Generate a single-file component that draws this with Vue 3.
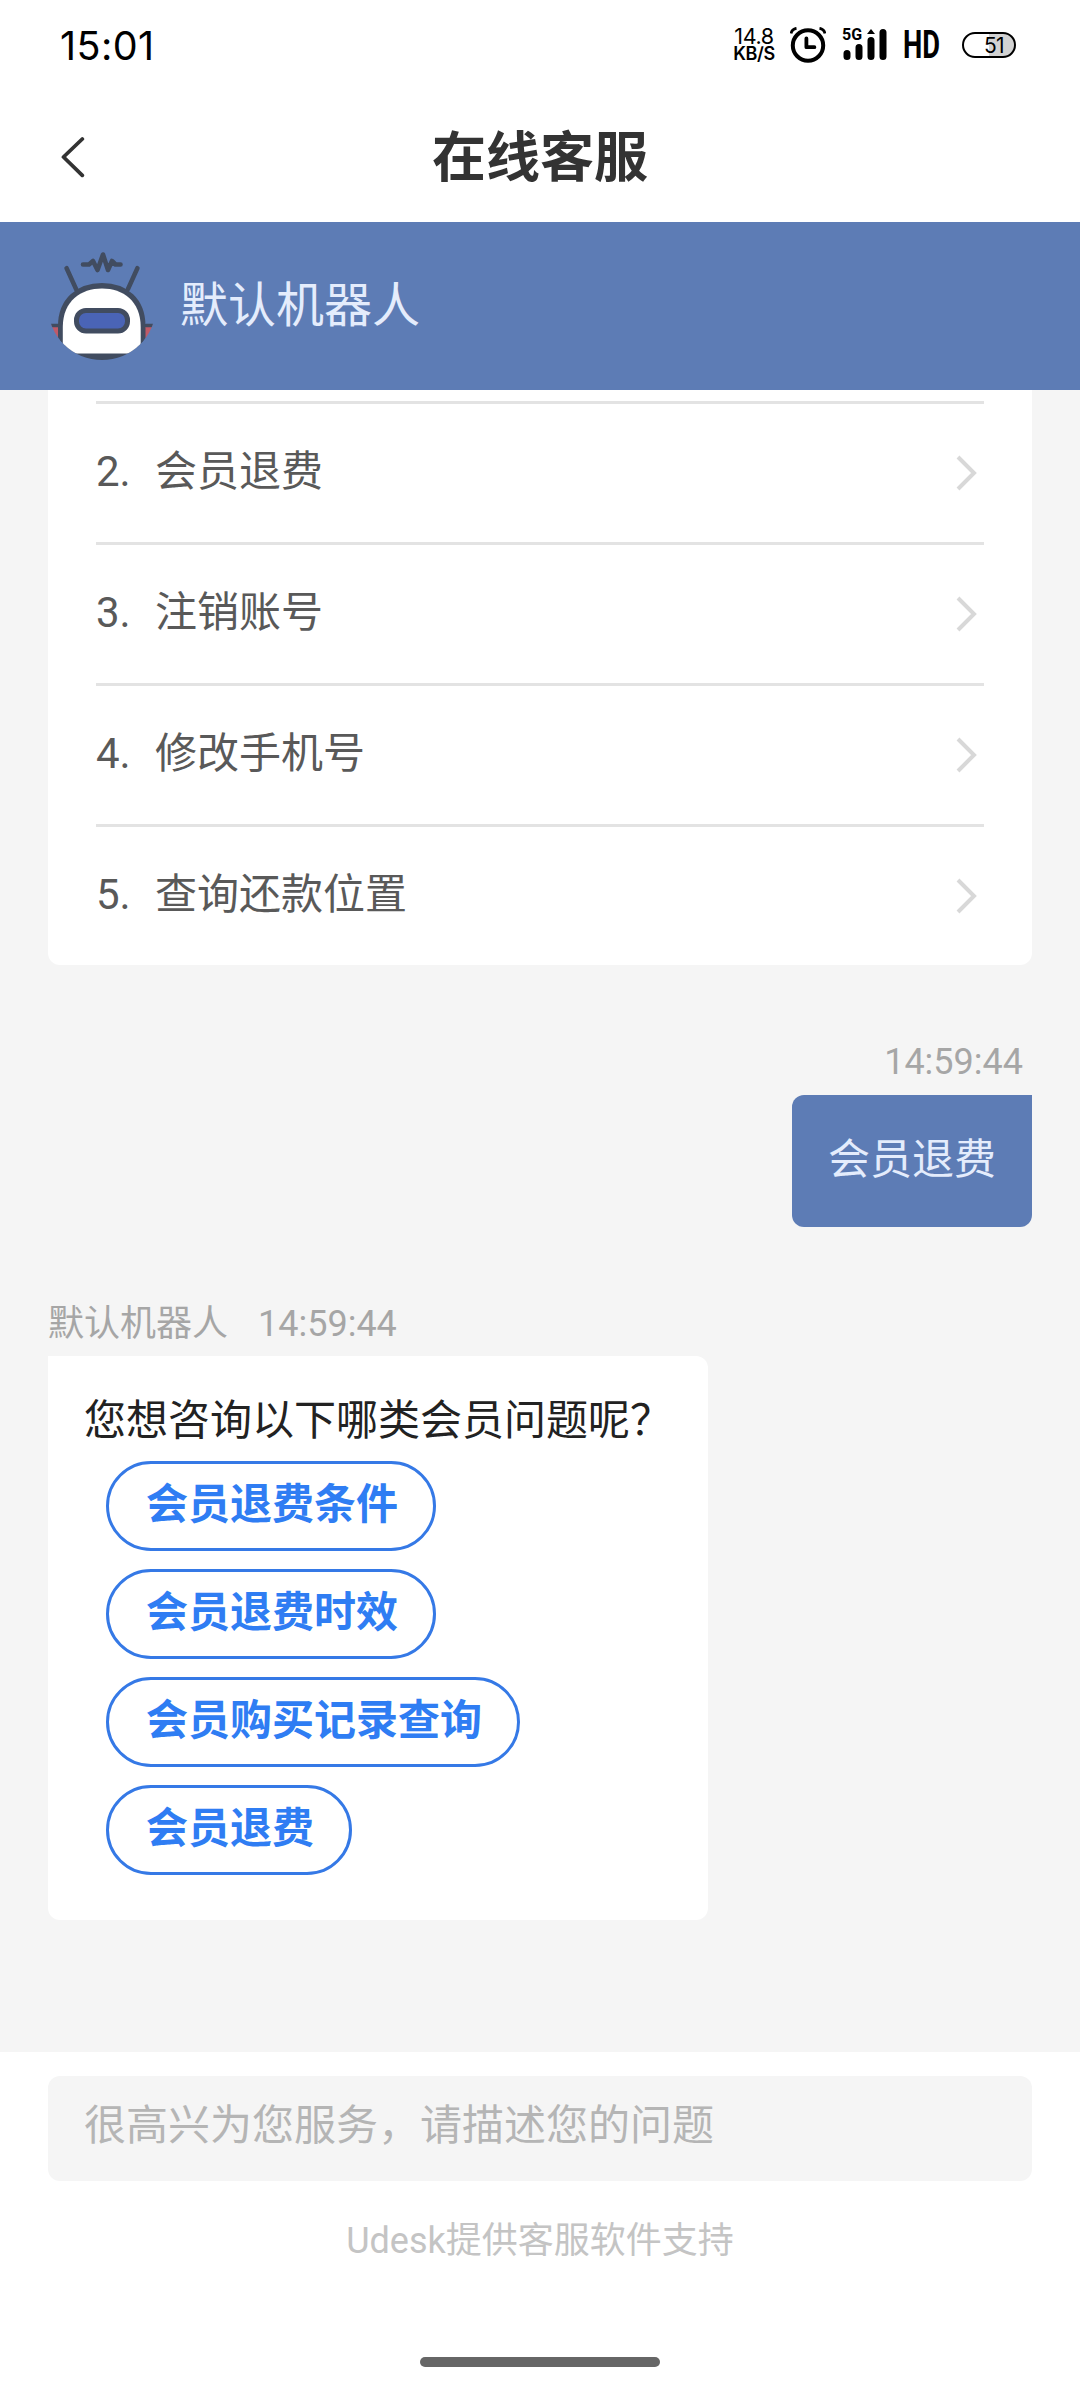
<script setup>
const questions = [
  { no: 2, text: '会员退费' },
  { no: 3, text: '注销账号' },
  { no: 4, text: '修改手机号' },
  { no: 5, text: '查询还款位置' },
]
const options = ['会员退费条件', '会员退费时效', '会员购买记录查询', '会员退费']
</script>

<template>
  <div class="screen">
    <div class="status">
      <span class="clock">15:01</span>
      <div class="indicators">
        <div class="speed"><span class="rate">14.8</span><span class="unit">KB/S</span></div>
        <svg class="alarm" width="36" height="36" viewBox="0 0 36 36">
          <circle cx="18" cy="18.5" r="15.2" fill="none" stroke="#000" stroke-width="4" />
          <path d="M16.4 11.500v8.700h8" fill="none" stroke="#000" stroke-width="3.8" stroke-linecap="round" stroke-linejoin="round" />
          <path d="M1 6.500Q2 2 6.500 1.300M35 6.500Q34 2 29.500 1.300" fill="none" stroke="#000" stroke-width="2.8" />
        </svg>
        <div class="signal">
          <span class="net">5G</span>
          <svg width="44" height="34" viewBox="0 0 44 34">
            <g stroke="#000" stroke-width="7" stroke-linecap="round">
              <path d="M4 25.500V28.500M16 19.500V28.500M28 12.500V28.500M40 4.500V28.500" />
            </g>
            <path d="M24 6L28 1L32 6Z" />
          </svg>
        </div>
        <span class="hd">HD</span>
        <div class="battery"><span>51</span></div>
      </div>
    </div>

    <header class="nav">
      <svg class="back" width="24" height="44" viewBox="0 0 24 44">
        <path d="M21.300 3L2.500 21L21.300 39.300" fill="none" stroke="#333" stroke-width="3.8" stroke-linecap="round" stroke-linejoin="round" />
      </svg>
      <h1>在线客服</h1>
    </header>

    <section class="agent">
      <svg class="avatar" width="108" height="108" viewBox="0 0 108 108">
        <defs><clipPath id="round"><circle cx="54" cy="54" r="54" /></clipPath></defs>
        <g clip-path="url(#round)" stroke="#414c60" stroke-linecap="round" stroke-linejoin="round">
          <path d="M35 12.500H41L45 9L49.500 18L55 2.500L60 18L64 9L67.500 12.500H72.500" fill="none" stroke-width="4.600" />
          <path d="M18.500 16L28.500 38M89.500 16L80 37" fill="none" stroke-width="4.500" />
          <rect x="1" y="73" width="9" height="13" fill="#c05a68" stroke="none" />
          <rect x="97" y="73" width="9" height="13" fill="#c05a68" stroke="none" />
          <path d="M3 73.500H10M98 73.500H105" stroke-width="3.500" />
          <path d="M12 120V74C12 48 30 33 54 33S95.500 48 95.500 74V120Z" fill="#414c60" stroke-width="4" />
          <path d="M14.800 101.500V75C14.800 49 33 36.500 54 36.500S92.700 49 92.700 75V101.500Z" fill="#fff" stroke="none" />
          <rect x="28.500" y="58.500" width="51" height="20.500" rx="9.500" fill="#4a64b6" stroke-width="5" />
        </g>
      </svg>
      <span class="agent-name">默认机器人</span>
    </section>

    <main class="chat">
      <ul class="faq">
        <li v-for="q in questions" :key="q.no">
          <span class="no">{{ q.no }}.</span>
          <span class="q">{{ q.text }}</span>
          <svg class="chev" width="22" height="36" viewBox="0 0 22 36">
            <path d="M2 2L18 18L2 34" fill="none" stroke="#d8d8d8" stroke-width="4" />
          </svg>
        </li>
      </ul>

      <div class="sent">
        <time>14:59:44</time>
        <div class="bubble">会员退费</div>
      </div>

      <div class="received">
        <div class="meta"><span>默认机器人</span><time>14:59:44</time></div>
        <div class="answer">
          <p>您想咨询以下哪类会员问题呢？</p>
          <button v-for="o in options" :key="o" type="button">{{ o }}</button>
        </div>
      </div>
    </main>

    <footer class="composer">
      <div class="input">很高兴为您服务，请描述您的问题</div>
      <p class="support">Udesk提供客服软件支持</p>
      <div class="home"></div>
    </footer>
  </div>
</template>

<style>
body {
  margin: 0;
  background: #fff;
}
</style>

<style scoped>
* {
  box-sizing: border-box;
}
.screen {
  display: flex;
  flex-direction: column;
  width: 1080px;
  height: 2400px;
  overflow: hidden;
  background: #fff;
  font-family: Roboto, "Noto Sans CJK SC", sans-serif;
  font-size: 42px;
}
.status {
  display: flex;
  justify-content: space-between;
  height: 92px;
  padding: 0 64px 0 60px;
  color: #000;
  font-family: Inter, sans-serif;
}
.clock {
  font-size: 39.500px;
  line-height: 92px;
  font-weight: 400;
  letter-spacing: 0.4px;
}
.indicators {
  display: flex;
  align-items: flex-start;
}
.speed {
  display: flex;
  flex-direction: column;
  align-items: center;
  width: 44px;
  margin: 28px 2px 0 0;
  line-height: 17px;
}
.rate {
  font-size: 21.500px;
  font-weight: 400;
  letter-spacing: -0.4px;
}
.unit {
  font-size: 18px;
  font-weight: 600;
  letter-spacing: -0.4px;
}
.alarm {
  margin: 27px 0 0 12px;
}
.signal {
  position: relative;
  width: 44px;
  height: 34px;
  margin: 28px 0 0 17px;
}
.signal svg {
  display: block;
}
.net {
  position: absolute;
  left: -1px;
  top: -1px;
  font-family: Roboto, sans-serif;
  font-size: 16px;
  line-height: 16px;
  font-weight: 700;
}
.hd {
  width: 38px;
  margin-left: 16px;
  font-family: Roboto, sans-serif;
  font-size: 39px;
  line-height: 91px;
  font-weight: 700;
  transform: scaleX(0.7);
  transform-origin: left;
}
.battery {
  width: 54px;
  height: 26px;
  margin: 32px 0 0 21px;
  padding-right: 10px;
  border: 2px solid #000;
  border-radius: 13px;
  background: linear-gradient(90deg, #fff 50%, #d2d2d2 50%);
  font-size: 21px;
  line-height: 23px;
  letter-spacing: -0.6px;
  text-align: right;
}
.nav {
  display: flex;
  align-items: center;
  height: 130px;
  padding: 0 60px 0 61px;
}
.back {
  margin-top: 2px;
}
.nav h1 {
  flex: 1;
  margin: 0 25px 0 0;
  padding-top: 3px;
  color: #333;
  font-size: 54px;
  line-height: 127px;
  font-weight: 700;
  text-align: center;
}
.agent {
  display: flex;
  align-items: center;
  height: 168px;
  flex: none;
  padding-left: 48px;
  background: #5d7cb5;
}
.agent-name {
  margin-left: 24px;
  color: #e4ecfc;
  font-size: 48px;
  line-height: 168px;
}
.chat {
  height: 1662px;
  flex: none;
  padding: 0 48px;
  background: #f5f5f5;
}
.faq {
  margin: 0;
  padding: 11px 48px 0;
  border-radius: 0 0 12px 12px;
  background: #fff;
  list-style: none;
}
.faq li {
  display: flex;
  align-items: center;
  height: 141px;
  padding-right: 6px;
  border-top: 3px solid #e3e3e3;
  color: #595959;
  line-height: 136px;
}
.no,
.q {
  padding-bottom: 2px;
}
.no {
  width: 59px;
}
.chev {
  margin-left: auto;
}
.sent {
  display: flex;
  flex-direction: column;
  align-items: flex-end;
  margin-top: 72px;
}
time,
.meta {
  color: #a6a6a6;
  font-size: 36px;
  line-height: 50px;
}
.sent time {
  height: 58px;
  padding-right: 9px;
}
.bubble {
  height: 132px;
  padding: 0 36px;
  border-radius: 12px 0 12px 12px;
  background: #5d7cb5;
  color: #e4ecfc;
  line-height: 130px;
}
.received {
  margin-top: 72px;
}
.meta {
  display: flex;
  gap: 30px;
  height: 57px;
}
.answer {
  display: flex;
  flex-direction: column;
  align-items: flex-start;
  gap: 18px;
  width: 660px;
  height: 564px;
  padding: 33px 36px 0;
  border-radius: 0 12px 12px 12px;
  background: #fff;
}
.answer p {
  height: 54px;
  margin: 0;
  color: #222;
  line-height: 64px;
  white-space: nowrap;
}
button {
  height: 90px;
  margin: 0 0 0 22px;
  padding: 0 35px 2px 37px;
  border: 3px solid #3579e6;
  border-radius: 45px;
  background: transparent;
  color: #2f7df3;
  font: 700 42px/82px Roboto, "Noto Sans CJK SC", sans-serif;
}
.composer {
  display: flex;
  flex-direction: column;
  align-items: center;
  padding: 24px 48px 0;
}
.input {
  width: 100%;
  height: 105px;
  padding-left: 36px;
  border-radius: 12px;
  background: #f5f5f5;
  color: #b5b5b5;
  line-height: 100px;
}
.support {
  height: 60px;
  margin: 30px 0 0;
  color: #c4c4c4;
  font-size: 36px;
  line-height: 60px;
}
.home {
  width: 240px;
  height: 10px;
  margin-top: 86px;
  border-radius: 5px;
  background: #666;
}
</style>
